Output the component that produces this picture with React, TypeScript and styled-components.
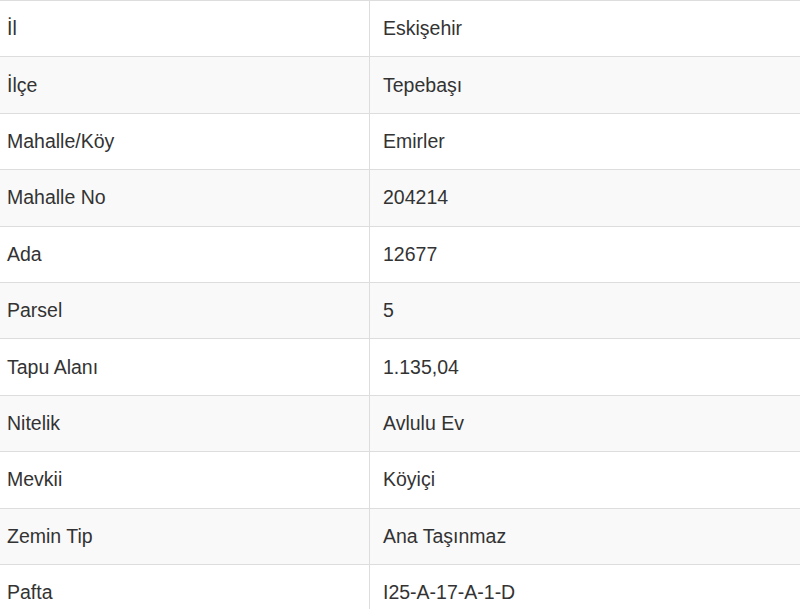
import React from "react";
import styled, { createGlobalStyle } from "styled-components";

const Global = createGlobalStyle`
  html, body { margin: 0; padding: 0; background: #ffffff; }
  body { font-family: "Liberation Sans", Arial, sans-serif; }
`;

const Table = styled.div`
  display: flex;
  flex-direction: column;
  width: 800px;
  border-top: 1.4px solid #dddddd;
`;

const Row = styled.div<{ $striped: boolean }>`
  display: grid;
  grid-template-columns: 369px 1fr;
  height: 56.4px;
  box-sizing: border-box;
  border-bottom: 1.4px solid #dddddd;
  background: ${(p) => (p.$striped ? "#f9f9f9" : "#ffffff")};
  flex-shrink: 0;
`;

const Label = styled.div`
  display: flex;
  align-items: center;
  padding-left: 7px;
  font-size: 19.5px;
  color: #333333;
`;

const Value = styled.div`
  display: flex;
  align-items: center;
  padding-left: 13px;
  border-left: 1.4px solid #dddddd;
  font-size: 19.5px;
  color: #333333;
`;

const rows: [string, string][] = [
  ["İl", "Eskişehir"],
  ["İlçe", "Tepebaşı"],
  ["Mahalle/Köy", "Emirler"],
  ["Mahalle No", "204214"],
  ["Ada", "12677"],
  ["Parsel", "5"],
  ["Tapu Alanı", "1.135,04"],
  ["Nitelik", "Avlulu Ev"],
  ["Mevkii", "Köyiçi"],
  ["Zemin Tip", "Ana Taşınmaz"],
  ["Pafta", "I25-A-17-A-1-D"],
];

export default function App() {
  return (
    <>
      <Global />
      <Table>
        {rows.map(([k, v], i) => (
          <Row key={k} $striped={i % 2 === 1}>
            <Label>{k}</Label>
            <Value>{v}</Value>
          </Row>
        ))}
      </Table>
    </>
  );
}
